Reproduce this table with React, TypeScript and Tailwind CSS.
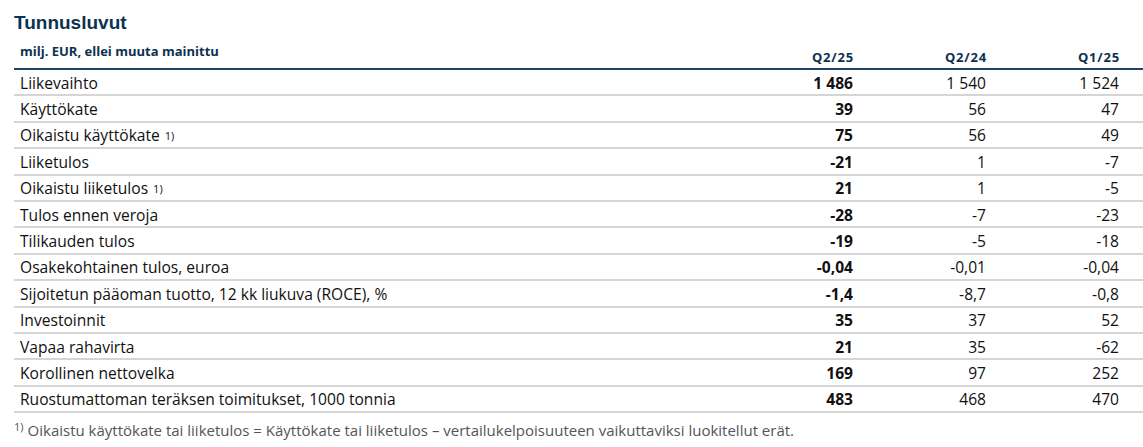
const rows: { label: string; note?: boolean; a: string; b: string; c: string }[] = [
  { label: 'Liikevaihto', a: '1 486', b: '1 540', c: '1 524' },
  { label: 'Käyttökate', a: '39', b: '56', c: '47' },
  { label: 'Oikaistu käyttökate', note: true, a: '75', b: '56', c: '49' },
  { label: 'Liiketulos', a: '-21', b: '1', c: '-7' },
  { label: 'Oikaistu liiketulos', note: true, a: '21', b: '1', c: '-5' },
  { label: 'Tulos ennen veroja', a: '-28', b: '-7', c: '-23' },
  { label: 'Tilikauden tulos', a: '-19', b: '-5', c: '-18' },
  { label: 'Osakekohtainen tulos, euroa', a: '-0,04', b: '-0,01', c: '-0,04' },
  { label: 'Sijoitetun pääoman tuotto, 12 kk liukuva (ROCE), %', a: '-1,4', b: '-8,7', c: '-0,8' },
  { label: 'Investoinnit', a: '35', b: '37', c: '52' },
  { label: 'Vapaa rahavirta', a: '21', b: '35', c: '-62' },
  { label: 'Korollinen nettovelka', a: '169', b: '97', c: '252' },
  { label: 'Ruostumattoman teräksen toimitukset, 1000 tonnia', a: '483', b: '468', c: '470' },
];

export default function App() {
  return (
    <div className="w-[1143px] h-[447px] bg-white overflow-hidden pl-[14px] pt-[11px] font-['Open_Sans',Arial,sans-serif] text-[#111]">
      <h1 className="font-['Liberation_Sans',Arial,sans-serif] text-[19px] leading-[24px] font-bold text-[#0d3150]">Tunnusluvut</h1>

      <div className="w-[1129px]">
        <div className="flex items-end h-[35px] border-b-2 border-[#1f4468] pb-[3px] text-[13px] leading-[16px] font-bold text-[#0d3150]">
          <div className="flex-1 self-start pt-[8px] pl-[6px]">milj. EUR, ellei muuta mainittu</div>
          <div className="w-[100px] text-right tracking-[0.8px]">Q2/25</div>
          <div className="w-[133px] text-right tracking-[0.8px]">Q2/24</div>
          <div className="w-[133px] text-right tracking-[0.8px]">Q1/25</div>
          <div className="w-[23px]" />
        </div>

        {rows.map((r) => (
          <div key={r.label} className="flex items-center h-[26.4px] border-b-2 border-[#d5d5d5] text-[15.6px] leading-[18px] pt-[1px]">
            <div className="flex-1 pl-[6px]">
              {r.label}
              {r.note && <sup className="ml-[5px] text-[11px] relative -top-[1px]">1)</sup>}
            </div>
            <div className="w-[100px] text-right font-bold">{r.a}</div>
            <div className="w-[133px] text-right">{r.b}</div>
            <div className="w-[133px] text-right">{r.c}</div>
            <div className="w-[24px]" />
          </div>
        ))}
      </div>

      <p className="mt-[8px] text-[15px] leading-[18px] text-[#555]">
        <sup className="text-[11px] mr-[4px]">1)</sup>
        Oikaistu käyttökate tai liiketulos = Käyttökate tai liiketulos – vertailukelpoisuuteen vaikuttaviksi luokitellut erät.
      </p>
    </div>
  );
}
